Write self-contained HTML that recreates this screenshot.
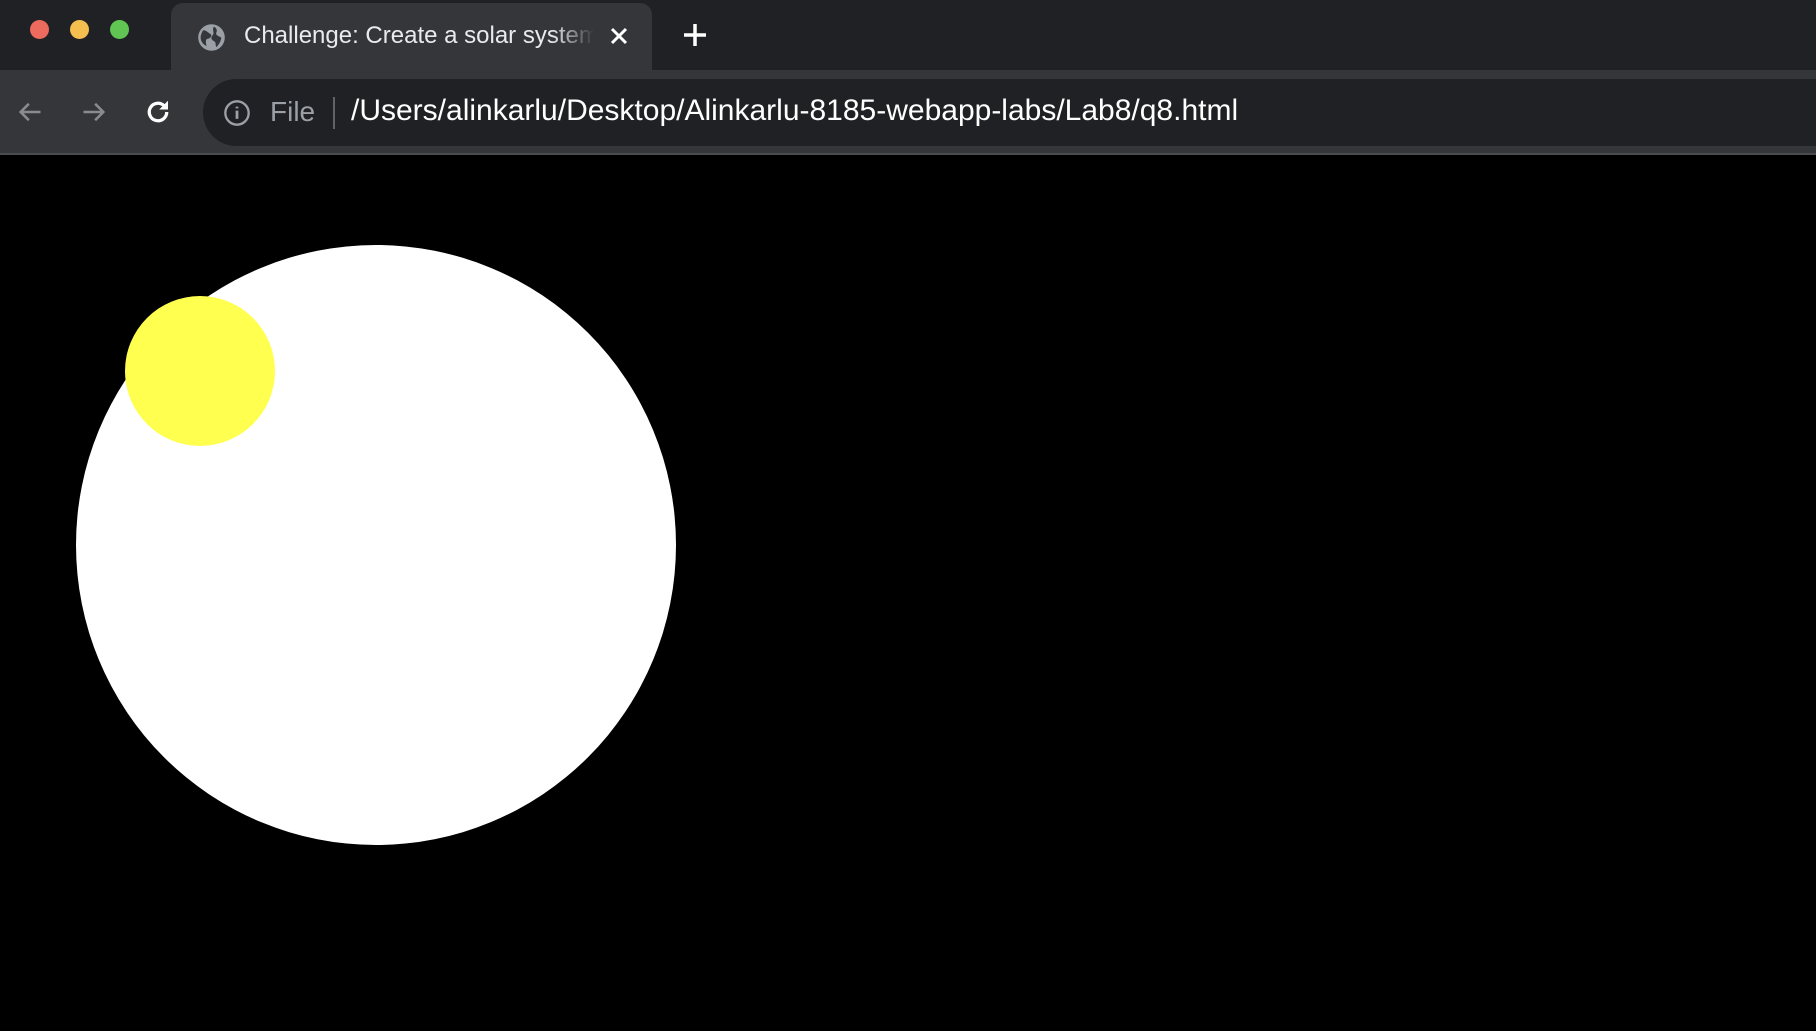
<!DOCTYPE html>
<html><head><style>
body{margin:0;width:1816px;height:1031px;background:#000;overflow:hidden;font-family:"Liberation Sans",sans-serif;position:relative}
.strip{position:absolute;left:0;top:0;width:1816px;height:70px;background:#202124}
.dot{position:absolute;top:20px;width:19px;height:19px;border-radius:50%}
.tab{position:absolute;left:171px;top:3px;width:481px;height:67px;background:#35363a;border-radius:12px 12px 0 0}
.toolbar{position:absolute;left:0;top:70px;width:1816px;height:83px;background:#35363a;border-bottom:2px solid #4a4b4f}
.omni{position:absolute;left:203px;top:9px;width:1700px;height:67px;background:#202124;border-radius:34px}
.page{position:absolute;left:0;top:155px;width:1816px;height:876px;background:#000}
</style></head><body>
<div class="strip">
<div class="dot" style="left:30px;background:#ed6a5e"></div>
<div class="dot" style="left:70px;background:#f5bf4f"></div>
<div class="dot" style="left:110px;background:#61c554"></div>
<div class="tab">
<svg style="position:absolute;left:26px;top:20px" width="29" height="29" viewBox="0 0 24 24"><circle cx="12" cy="12" r="11" fill="#9aa0a6"/><path d="M5 6c3 0 4 2 6 3s0 4-2 4-2 3-1 6c-3-1-5-4-5-7 0-2 1-4 2-6zM14 3c2 1 3 3 2 5s2 3 4 4c0 3-2 6-4 8-1-2 0-4-2-5s-3-3-1-5-1-4 1-7z" fill="#35363a"/></svg>
<div style="position:absolute;left:73px;top:19px;color:#e8eaed;font-size:24px;white-space:nowrap;width:350px;overflow:hidden;-webkit-mask-image:linear-gradient(to right,#000 88%,transparent)">Challenge: Create a solar system</div>
<svg style="position:absolute;left:438px;top:23px" width="20" height="20" viewBox="0 0 20 20"><path d="M3 3l14 14M17 3L3 17" stroke="#fff" stroke-width="3"/></svg>
</div>
<svg style="position:absolute;left:682px;top:22px" width="26" height="26" viewBox="0 0 26 26"><path d="M13 2v22M2 13h22" stroke="#fff" stroke-width="3.5"/></svg>
</div>
<div class="toolbar">
<svg style="position:absolute;left:16px;top:28px" width="28" height="28" viewBox="0 0 24 24"><path d="M21 12H4M11 5l-7 7 7 7" stroke="#8a8b8e" stroke-width="2.2" fill="none"/></svg>
<svg style="position:absolute;left:80px;top:28px" width="28" height="28" viewBox="0 0 24 24"><path d="M3 12h17M13 5l7 7-7 7" stroke="#8a8b8e" stroke-width="2.2" fill="none"/></svg>
<svg style="position:absolute;left:143px;top:27px" width="30" height="30" viewBox="0 0 24 24"><path d="M19 12a7 7 0 1 1-2.2-5.1" stroke="#fff" stroke-width="2.6" fill="none"/><path d="M20 3v7h-7z" fill="#fff"/></svg>
<div class="omni">
<svg style="position:absolute;left:20px;top:20px" width="28" height="28" viewBox="0 0 24 24"><circle cx="12" cy="12" r="10" stroke="#9aa0a6" stroke-width="2" fill="none"/><path d="M12 10v7M12 6.5v1.5" stroke="#9aa0a6" stroke-width="2.4"/></svg>
<div style="position:absolute;left:67px;top:17px;color:#9aa0a6;font-size:28px">File</div>
<div style="position:absolute;left:130px;top:18px;width:2px;height:32px;background:#5f6368"></div>
<div style="position:absolute;left:148px;top:15px;color:#fff;font-size:30px;white-space:nowrap">/Users/alinkarlu/Desktop/Alinkarlu-8185-webapp-labs/Lab8/q8.html</div>
</div>
</div>
<div class="page">
<div style="position:absolute;left:76px;top:90px;width:600px;height:600px;border-radius:50%;background:#fff"></div>
<div style="position:absolute;left:125px;top:141px;width:150px;height:150px;border-radius:50%;background:#ffff50"></div>
</div>
</body></html>
